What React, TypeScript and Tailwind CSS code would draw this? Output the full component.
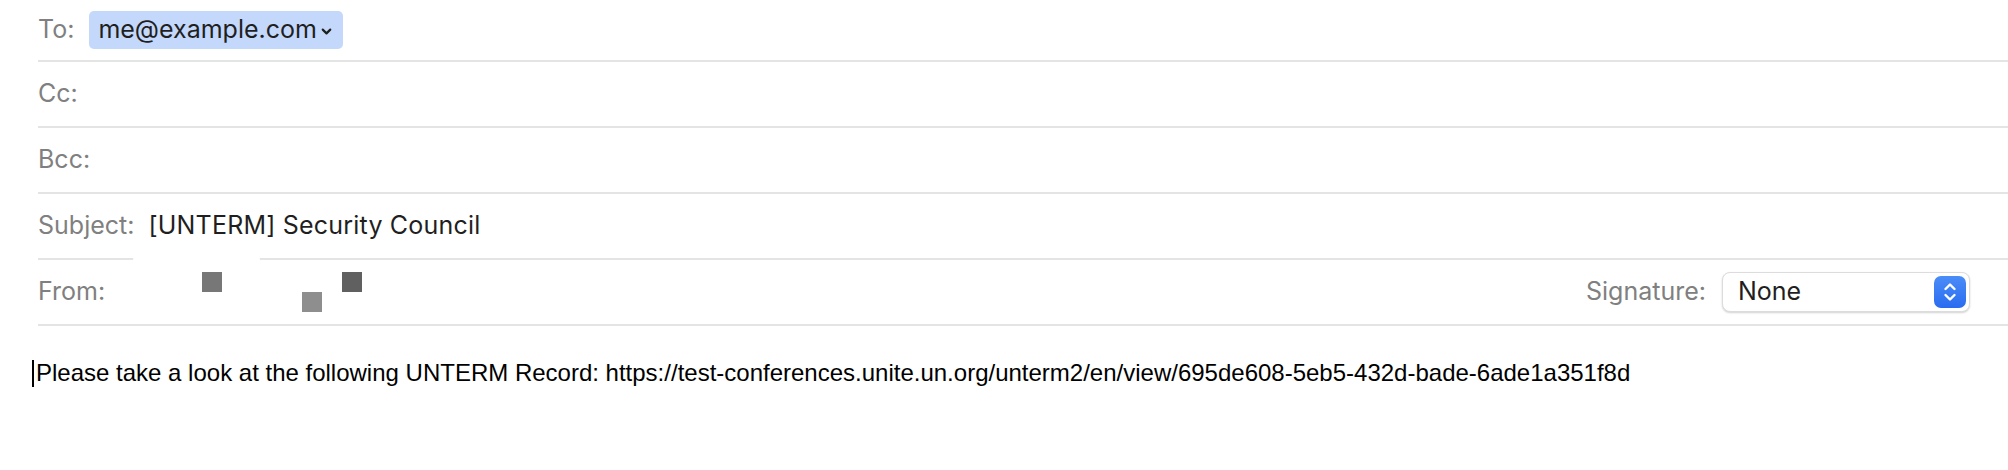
import { ChevronDown } from 'lucide-react';

const ui = { fontFamily: 'Inter, "Noto Sans", sans-serif' };
const body = { fontFamily: '"Liberation Sans", Arial, sans-serif' };

function Label({ children }: { children: React.ReactNode }) {
    return <span className="text-[25px] text-[#808080] shrink-0">{children}</span>;
}

function Stepper() {
    return (
        <div className="w-[32px] h-[32px] rounded-[7px] bg-gradient-to-b from-[#4a8cf7] to-[#2a6cf0] flex items-center justify-center">
            <svg width="16" height="22" viewBox="0 0 16 22" fill="none" stroke="white" strokeWidth="2.4" strokeLinecap="round" strokeLinejoin="round">
                <path d="M3.5 8 L8 3.5 L12.5 8" />
                <path d="M3.5 14 L8 18.5 L12.5 14" />
            </svg>
        </div>
    );
}

export default function App() {
    return (
        <div className="w-[2008px] h-[470px] bg-white overflow-hidden" style={ui}>
            <div className="ml-[38px]">
                <div className="h-[62px] border-b-2 border-[#e4e4e4] flex items-center gap-[15px]">
                    <Label>To:</Label>
                    <span className="h-[38px] rounded-[5px] bg-[#c4d8fb] flex items-center pl-[9px] pr-[9px] text-[25px] text-[#1f1f1f]">
                        me@example.com
                        <ChevronDown className="w-[15px] h-[15px] ml-[2px] mt-[2px]" strokeWidth={3.5} />
                    </span>
                </div>
                <div className="h-[66px] border-b-2 border-[#e4e4e4] flex items-center">
                    <Label>Cc:</Label>
                </div>
                <div className="h-[66px] border-b-2 border-[#e4e4e4] flex items-center">
                    <Label>Bcc:</Label>
                </div>
                <div className="h-[66px] border-b-2 border-[#e4e4e4] flex items-center gap-[14px]">
                    <Label>Subject:</Label>
                    <span className="text-[25px] text-[#1f1f1f] tracking-[0.2px]">[UNTERM] Security Council</span>
                </div>
                <div className="relative h-[66px] border-b-2 border-[#e4e4e4] flex items-center pr-[38px]">
                    <div className="absolute left-[95px] top-[-3px] w-[127px] h-[6px] rounded-full bg-white" />
                    <Label>From:</Label>
                    <div className="absolute left-[164px] top-[12px] w-[20px] h-[20px] bg-[#777777]" />
                    <div className="absolute left-[264px] top-[32px] w-[20px] h-[20px] bg-[#8e8e8e]" />
                    <div className="absolute left-[304px] top-[12px] w-[20px] h-[20px] bg-[#606060]" />
                    <div className="ml-auto flex items-center gap-[16px]">
                        <Label>Signature:</Label>
                        <div className="w-[248px] h-[40px] rounded-[8px] bg-white border border-[#dcdcdc] shadow-[0_1px_2px_rgba(0,0,0,0.18)] flex items-center justify-between pl-[15px] pr-[3px]">
                            <span className="text-[25px] text-[#1f1f1f]">None</span>
                            <Stepper />
                        </div>
                    </div>
                </div>
            </div>
            <div className="pl-[32px] pt-[29px] flex items-center text-[24px] text-black" style={body}>
                <span className="w-[2px] h-[27px] bg-black mr-[2px]" />
                <span>Please take a look at the following UNTERM Record: https://test-conferences.unite.un.org/unterm2/en/view/695de608-5eb5-432d-bade-6ade1a351f8d</span>
            </div>
        </div>
    );
}
